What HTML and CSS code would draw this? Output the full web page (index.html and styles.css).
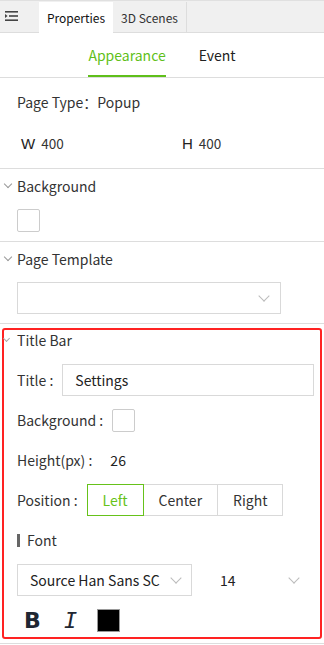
FILE: index.html
```html
<!DOCTYPE html>
<html>
<head>
<meta charset="utf-8">
<link rel="stylesheet" href="styles.css">
</head>
<body>
<div class="panel">
  <div class="tabbar">
    <div class="tab-icon">
      <svg width="13" height="10" viewBox="0 0 13 10"><rect x="0" y="0" width="13" height="1.6" fill="#444"/><rect x="4" y="4.2" width="9" height="1.6" fill="#444"/><path d="M0 2.9 L2.6 5 L0 7.1 Z" fill="#444"/><rect x="0" y="8.4" width="13" height="1.6" fill="#444"/></svg>
    </div>
    <div class="tab active">Properties</div>
    <div class="tab">3D Scenes</div>
  </div>
  <div class="subtabs">
    <div class="subtab on">Appearance</div>
    <div class="subtab">Event</div>
  </div>
  <div class="section info">
    <div class="row">Page Type：Popup</div>
    <div class="row dims">
      <div class="dim dim-w"><span class="dim-l">W</span>400</div>
      <div class="dim"><span class="dim-l">H</span>400</div>
    </div>
  </div>
  <div class="section">
    <div class="shead"><span class="chev"></span>Background</div>
    <div class="swatch"></div>
  </div>
  <div class="section">
    <div class="shead"><span class="chev"></span>Page Template</div>
    <div class="select wide"><span></span><span class="chev2"></span></div>
  </div>
  <div class="titlebar">
    <div class="shead small"><span class="chev sm"></span>Title Bar</div>
    <div class="frow"><span class="lbl">Title :</span><div class="input">Settings</div></div>
    <div class="frow"><span class="lbl">Background :</span><div class="swatch"></div></div>
    <div class="frow"><span class="lbl">Height(px) :</span><span class="val">26</span></div>
    <div class="frow"><span class="lbl">Position :</span>
      <div class="btns"><div class="btn on">Left</div><div class="btn">Center</div><div class="btn">Right</div></div>
    </div>
    <div class="frow"><span class="bar"></span>Font</div>
    <div class="frow">
      <div class="select font"><span>Source Han Sans SC</span><span class="chev2"></span></div>
      <div class="select size"><span>14</span><span class="chev2"></span></div>
    </div>
    <div class="frow styles">
      <span class="b">B</span>
      <span class="i">I</span>
      <span class="color"></span>
    </div>
  </div>
  <div class="endline"></div>
</div>
</body>
</html>
```
FILE: styles.css
```css
* { box-sizing: border-box; }
body {
  margin: 0;
  background: #fff;
  font-family: "Noto Sans CJK SC", "Noto Sans", sans-serif;
  color: #333;
  font-size: 14px;
}
.panel { width: 324px; }
.tabbar {
  display: flex;
  height: 33px;
  background: #f0f0f0;
  border-top: 1px solid #e0e0e0;
  border-bottom: 1px solid #ddd;
}
.tab-icon {
  width: 39px;
  display: flex;
  align-items: center;
  padding-left: 5px;
  padding-bottom: 2px;
}
.tab {
  width: 74px;
  display: flex;
  align-items: center;
  justify-content: center;
  font-size: 12px;
  color: #333;
  border-right: 1px solid #ddd;
  margin-top: 1px;
}
.tab.active {
  background: #fff;
  color: #111;
  border-right: none;
  margin-bottom: -1px;
}
.subtabs {
  display: flex;
  justify-content: center;
  gap: 33px;
  height: 45px;
  border-bottom: 1px solid #ddd;
}
.subtab {
  font-size: 14px;
  color: #222;
  display: flex;
  align-items: center;
  border-bottom: 2px solid transparent;
  padding-top: 1px;
}
.subtab.on { color: #5fbf1a; border-bottom-color: #5fbf1a; }
.section {
  border-bottom: 1px solid #ddd;
  padding-bottom: 9px;
}
.info { padding: 11px 0 12px 17px; display: flex; flex-direction: column; gap: 15px; }
.info .row { height: 26px; display: flex; align-items: center; font-size: 14px; }
.dims { display: flex; }
.dim { display: flex; align-items: center; font-size: 13.5px; }
.dim-w { width: 165px; flex-shrink: 0; }
.dim-l { font-family: "Liberation Sans", sans-serif; font-size: 15px; margin: 0 6px 0 0; color: #222; }
.dim-w .dim-l { margin-left: 4px; }
.shead {
  height: 34px;
  display: flex;
  align-items: center;
  padding-left: 3px;
  font-size: 14px;
  color: #333;
}
.chev {
  width: 6px; height: 6px;
  border-right: 1px solid #999;
  border-bottom: 1px solid #999;
  transform: rotate(45deg);
  margin: -4px 6px 0 2px;
}
.swatch {
  width: 23px; height: 23px;
  border: 1px solid #ccc;
  border-radius: 2px;
  margin: 6px 0 0 17px;
}
.select {
  display: flex;
  align-items: center;
  justify-content: space-between;
  height: 32px;
  border: 1px solid #d9d9d9;
}
.select.wide { width: 264px; margin: 6px 0 0 17px; padding: 0 12px; }
.chev2 {
  width: 8px; height: 8px;
  border-right: 1px solid #bbb;
  border-bottom: 1px solid #bbb;
  transform: rotate(45deg);
  margin-top: -5px;
}
.titlebar {
  margin: 4px 2px 0 2px;
  border: 2px solid #ff2222;
  border-radius: 3px;
  padding: 0 6px 1px 13px;
  display: flex;
  flex-direction: column;
  gap: 8px;
}
.shead.small { height: 20px; margin-bottom: 6px; padding-left: 0; margin-left: -13px; }
.chev.sm { width: 5px; height: 5px; margin: -3px 8px 0 0; border-color: #aaa; }
.frow { height: 32px; display: flex; align-items: center; font-size: 14px; color: #333; }
.lbl { margin-right: 9px; }
.input {
  flex: 1;
  height: 32px;
  border: 1px solid #d9d9d9;
  display: flex;
  align-items: center;
  padding-left: 12px;
  color: #222;
}
.frow .swatch { margin: 0; }
.val { margin-left: 9px; color: #222; }
.btns { display: flex; }
.btn {
  height: 32px;
  padding: 0 15px;
  border: 1px solid #d9d9d9;
  margin-left: -1px;
  display: flex;
  align-items: center;
  color: #333;
}
.btn:first-child { margin-left: 0; }
.btn.on { border-color: #66c21a; color: #66c21a; position: relative; z-index: 1; }
.bar { width: 3px; height: 13px; background: #666; margin-right: 7px; }
.select.font { width: 175px; padding: 0 11px 0 12px; color: #222; }
.select.size { width: 100px; border: none; margin-left: 16px; padding: 0 10px 0 12px; color: #222; }
.styles { gap: 0; }
.b {
  font-family: "DejaVu Sans", sans-serif;
  font-weight: bold;
  font-size: 22px;
  color: #1f2733;
  margin-left: 7px;
  width: 40px;
}
.i {
  font-family: "DejaVu Sans Mono", monospace;
  font-style: italic;
  font-size: 22px;
  color: #1f2733;
  width: 33px;
}
.color {
  width: 23px; height: 23px;
  background: #000;
  border: 1px solid #999;
}
.endline { border-bottom: 1px solid #ddd; margin-top: 4px; }
```
